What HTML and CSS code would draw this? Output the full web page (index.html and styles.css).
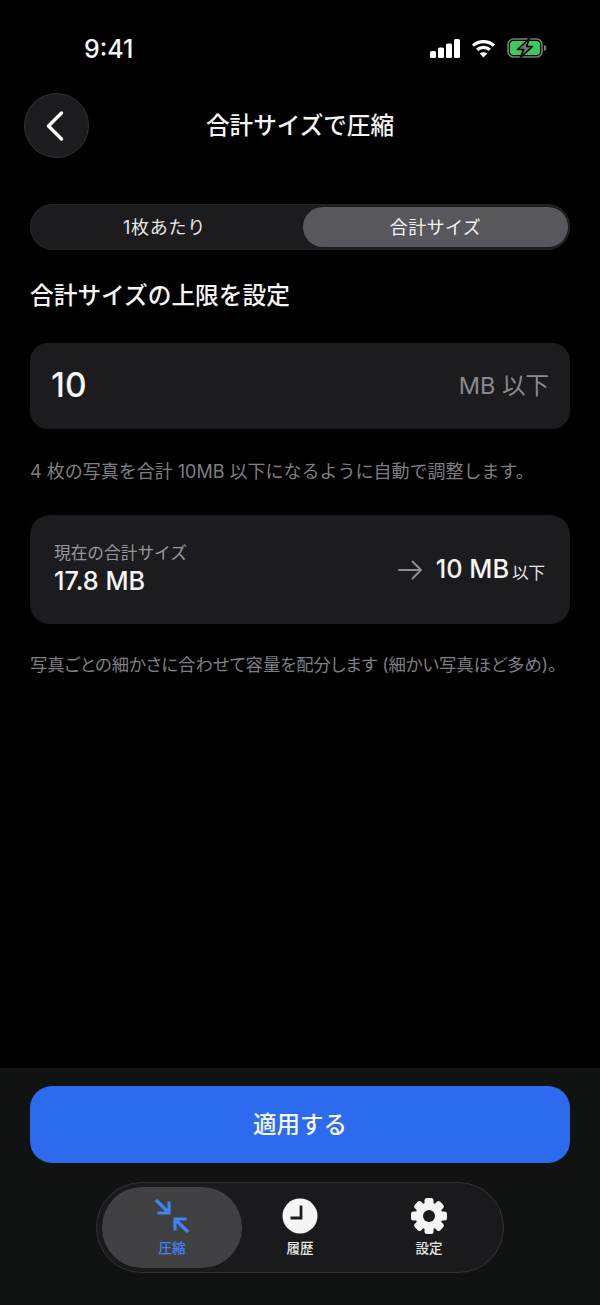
FILE: index.html
```html
<!doctype html>
<html lang="ja">
<head>
    <meta charset="UTF-8">
    <meta name="viewport" content="width=device-width, initial-scale=1.0">
    <title>合計サイズで圧縮</title>
    <link rel="stylesheet" href="styles.css">
</head>
<body>
    <div id="screen">
        <div class="status-bar">
            <span class="status-time">9:41</span>
            <div class="status-icons">
                <svg width="30" height="19" viewBox="0 0 30 19" fill="#fff">
                    <rect x="0" y="12" width="6" height="7" rx="1.5"/>
                    <rect x="8" y="8.5" width="6" height="10.5" rx="1.5"/>
                    <rect x="16" y="4.5" width="6" height="14.5" rx="1.5"/>
                    <rect x="24" y="0" width="6" height="19" rx="1.5"/>
                </svg>
                <svg width="25" height="19" viewBox="0 0 24 19" fill="none" stroke="#fff" stroke-width="3.2">
                    <path d="M1.5 6.6C7.4 1.2 16.6 1.2 22.5 6.6"/>
                    <path d="M5.6 10.8C9.3 7.5 14.7 7.5 18.4 10.8"/>
                    <path d="M12 18.6L8.2 14.6C10.4 12.9 13.6 12.9 15.8 14.6Z" fill="#fff" stroke="none"/>
                </svg>
                <svg width="40" height="20" viewBox="0 0 40 20">
                    <rect x="1" y="1" width="34" height="18" rx="5.5" fill="none" stroke="#7b7b7b" stroke-width="1.6"/>
                    <rect x="3" y="3" width="30" height="14" rx="3.5" fill="#3ec95a"/>
                    <path d="M37 7c1.6.4 2.4 1.6 2.4 3s-.8 2.6-2.4 3z" fill="#7b7b7b"/>
                    <path d="M22.5 0.5L10.5 11.5H16.5L13.5 19.5L25.5 8.5H19.5Z" fill="#727272" stroke="#000" stroke-width="1.6" stroke-linejoin="round"/>
                </svg>
            </div>
        </div>

        <header class="top-bar">
            <button class="back-btn" aria-label="戻る">
                <svg width="20" height="32" viewBox="0 0 20 32" fill="none" stroke="#fff" stroke-width="3.4" stroke-linecap="round" stroke-linejoin="round">
                    <path d="M16.5 3L3.5 16L16.5 29"/>
                </svg>
            </button>
            <h1 class="top-title">合計サイズで圧縮</h1>
        </header>

        <main class="content">
            <div class="segment">
                <div class="segment-item first">1枚あたり</div>
                <div class="segment-item active">合計サイズ</div>
            </div>

            <h2 class="section-title">合計サイズの上限を設定</h2>

            <div class="size-input">
                <span class="size-value">10</span>
                <span class="size-unit">MB 以下</span>
            </div>
            <p class="help-text help-first">4 枚の写真を合計 10MB 以下になるように自動で調整します。</p>

            <div class="summary-card">
                <div class="summary-current">
                    <span class="summary-label">現在の合計サイズ</span>
                    <span class="summary-value">17.8 MB</span>
                </div>
                <div class="summary-target">
                    <svg width="26" height="20" viewBox="0 0 26 20" fill="none" stroke="#8e8e93" stroke-width="2" stroke-linecap="round" stroke-linejoin="round">
                        <path d="M2 10H24M15.5 1.5L24 10L15.5 18.5"/>
                    </svg>
                    <span class="summary-value target-value">10 MB</span>
                    <span class="summary-suffix">以下</span>
                </div>
            </div>
            <p class="help-text help-second">写真ごとの細かさに合わせて容量を配分します (細かい写真ほど多め)。</p>
        </main>

        <footer class="bottom-area">
            <button class="apply-btn">適用する</button>
            <nav class="tab-bar">
                <div class="tab-item active">
                    <svg width="36" height="36" viewBox="0 0 36 36" fill="none" stroke="#3f84f2" stroke-width="3.2">
                        <path d="M2 2L15 15M3.5 15H15V3.5"/>
                        <path d="M34 34L21 21M32.5 21H21V32.5"/>
                    </svg>
                    <span>圧縮</span>
                </div>
                <div class="tab-item">
                    <svg width="36" height="36" viewBox="0 0 36 36">
                        <circle cx="18" cy="18" r="17.5" fill="#f5f5f5"/>
                        <path d="M19 7.5V20H8.5" fill="none" stroke="#1c1c1e" stroke-width="2.8"/>
                    </svg>
                    <span>履歴</span>
                </div>
                <div class="tab-item">
                    <svg width="38" height="36" viewBox="0 0 38 36">
                        <g fill="#f5f5f5">
                            <rect x="14.5" y="0" width="9" height="36" rx="2.5"/>
                            <rect x="14.5" y="0" width="9" height="36" rx="2.5" transform="rotate(45 19 18)"/>
                            <rect x="14.5" y="0" width="9" height="36" rx="2.5" transform="rotate(90 19 18)"/>
                            <rect x="14.5" y="0" width="9" height="36" rx="2.5" transform="rotate(135 19 18)"/>
                            <circle cx="19" cy="18" r="13.5"/>
                        </g>
                        <circle cx="19" cy="18" r="6" fill="#1c1c1e"/>
                    </svg>
                    <span>設定</span>
                </div>
            </nav>
        </footer>
    </div>
</body>
</html>
```

FILE: styles.css
```css
* {
    margin: 0;
    padding: 0;
    box-sizing: border-box;
    font-family: Inter, "Noto Sans CJK JP", sans-serif;
}

body {
    background-color: #000;
    color: #fff;
}

#screen {
    width: 600px;
    height: 1305px;
    display: flex;
    flex-direction: column;
    overflow: hidden;
}

.status-bar {
    height: 93px;
    display: flex;
    justify-content: space-between;
    align-items: flex-start;
    padding: 35px 53px 0 84px;
}

.status-time {
    font-size: 25px;
    line-height: 28px;
    font-weight: 500;
    color: #f5f5f5;
}

.status-icons {
    display: flex;
    align-items: center;
    gap: 11px;
    padding-top: 3px;
}

.top-bar {
    height: 65px;
    padding-left: 24px;
    display: flex;
    align-items: center;
    position: relative;
}

.back-btn {
    width: 65px;
    height: 65px;
    border-radius: 50%;
    background: #1c1c1e;
    border: 1px solid #333335;
    display: flex;
    align-items: center;
    justify-content: center;
    padding-right: 4px;
}

.top-title {
    position: absolute;
    left: 0;
    right: 0;
    text-align: center;
    font-size: 23.6px;
    font-weight: 500;
    line-height: 32px;
    color: #f5f5f5;
}

.content {
    flex: 1;
    padding: 46px 30px 0;
}

.segment {
    height: 46px;
    background: #1c1c1e;
    border-radius: 23px;
    padding: 3px;
    display: grid;
    grid-template-columns: 270px 265px;
    box-shadow: inset 0 0 0 1px #262628;
}

.segment-item {
    display: flex;
    align-items: center;
    justify-content: center;
    font-size: 18px;
    letter-spacing: 0.4px;
    color: #e6e6e6;
    border-radius: 20px;
    padding-bottom: 3px;
}

.segment-item.first {
    padding-right: 7px;
    letter-spacing: 0.7px;
}

.segment-item.active {
    background: #58585c;
    color: #f2f2f2;
}

.section-title {
    margin-top: 29px;
    font-size: 23.7px;
    line-height: 34px;
    font-weight: 500;
    color: #f5f5f5;
}

.size-input {
    margin-top: 30px;
    height: 86px;
    background: #1c1c1e;
    border-radius: 18px;
    padding: 0 21px;
    display: flex;
    align-items: center;
    justify-content: space-between;
}

.size-value {
    font-size: 33.5px;
    font-weight: 500;
    color: #f5f5f5;
    padding-bottom: 2px;
}

.size-unit {
    font-size: 23.5px;
    color: #8a8a8e;
    padding-bottom: 5px;
}

.help-text {
    line-height: 26px;
    color: #7f7f83;
    white-space: nowrap;
}

.help-first {
    margin-top: 30px;
    font-size: 18px;
}

.help-second {
    margin-top: 28px;
    font-size: 17.35px;
    font-feature-settings: "palt";
}

.summary-card {
    margin-top: 30px;
    height: 109px;
    background: #1c1c1e;
    border-radius: 20px;
    padding: 0 25px 0 24px;
    display: flex;
    align-items: center;
    justify-content: space-between;
}

.summary-current {
    display: flex;
    flex-direction: column;
    padding-top: 1px;
}

.summary-label {
    font-size: 16.7px;
    line-height: 22px;
    color: #98989c;
}

.summary-value {
    font-size: 25.3px;
    line-height: 34px;
    font-weight: 500;
    color: #f5f5f5;
}

.summary-target {
    display: flex;
    align-items: center;
}

.summary-target svg {
    margin-right: 13px;
}

.target-value {
    margin-bottom: 2px;
}

.summary-suffix {
    font-size: 16.5px;
    margin: 5px 0 0 3px;
    color: #e6e6e6;
}

.bottom-area {
    height: 237px;
    background: #111212;
    padding: 18px 30px 0;
}

.apply-btn {
    width: 100%;
    height: 77px;
    background-color: #2c6bed;
    color: #f5f5f5;
    border: none;
    border-radius: 22px;
    font-size: 23.5px;
    font-weight: 500;
    padding-bottom: 4px;
}

.tab-bar {
    margin: 19px auto 0;
    width: 408px;
    height: 91px;
    background: #1a1a1c;
    border: 1px solid #333335;
    border-radius: 46px;
    padding: 4px 5px;
    display: grid;
    grid-template-columns: 140px 116px 142px;
}

.tab-item {
    display: flex;
    flex-direction: column;
    align-items: center;
    justify-content: center;
    gap: 5px;
    font-size: 13.5px;
    line-height: 18px;
    font-weight: 500;
    color: #e6e6e6;
    border-radius: 40px;
}

.tab-item.active {
    background: #414143;
    color: #3f84f2;
}
```
